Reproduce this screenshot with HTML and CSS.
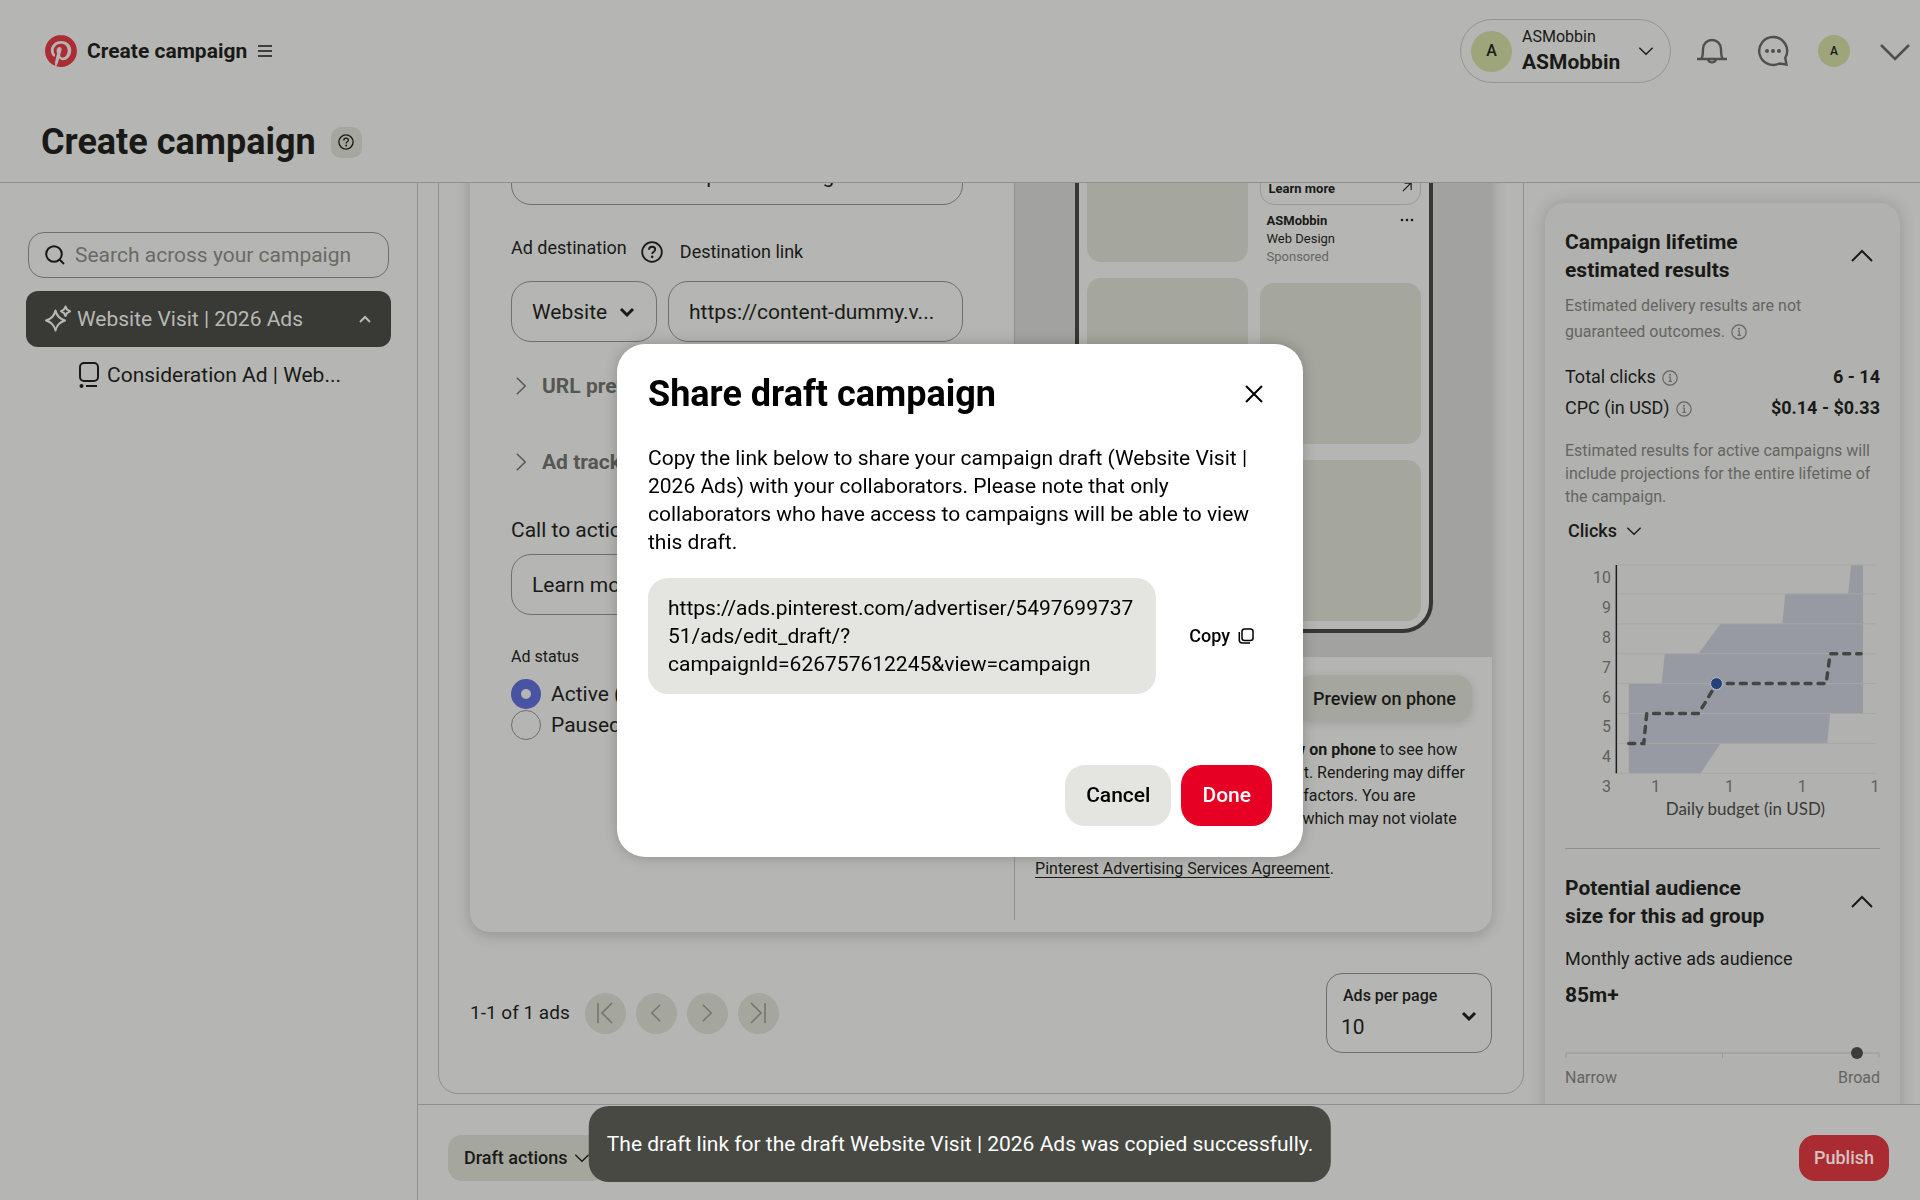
FILE: index.html
```html
<!DOCTYPE html>
<html lang="en">
<head>
<meta charset="utf-8">
<title>Create campaign</title>
<link rel="stylesheet" href="styles.css">
</head>
<body>
<svg class="defs" aria-hidden="true">
  <symbol id="down" viewBox="0 0 24 24"><path d="M2 7l10 10L22 7" fill="none" stroke="currentColor" stroke-width="2"/></symbol>
  <symbol id="down-bold" viewBox="0 0 24 24"><path d="M3 7.500l9 9 9-9" fill="none" stroke="currentColor" stroke-width="4.500"/></symbol>
  <symbol id="up" viewBox="0 0 24 24"><path d="M2 17L12 7l10 10" fill="none" stroke="currentColor" stroke-width="2"/></symbol>
  <symbol id="right" viewBox="0 0 24 24"><path d="M7 2l10 10L7 22" fill="none" stroke="currentColor" stroke-width="1.800"/></symbol>
  <symbol id="left" viewBox="0 0 24 24"><path d="M17 2L7 12l10 10" fill="none" stroke="currentColor" stroke-width="1.800"/></symbol>
  <symbol id="help" viewBox="0 0 24 24"><circle cx="12" cy="12" r="10.700" fill="none" stroke="currentColor" stroke-width="2"/><path d="M8.700 9.600c0-2 1.500-3.300 3.400-3.300s3.400 1.200 3.400 3c0 2.400-3.300 2.500-3.300 5" fill="none" stroke="currentColor" stroke-width="2"/><circle cx="12.200" cy="17.300" r="1.400" fill="currentColor"/></symbol>
  <symbol id="info" viewBox="0 0 24 24"><circle cx="12" cy="12" r="10.700" fill="none" stroke="currentColor" stroke-width="1.800"/><path d="M10 10.500h2.300v6.500M9.800 17h5" fill="none" stroke="currentColor" stroke-width="1.800"/><circle cx="12" cy="7" r="1.400" fill="currentColor"/></symbol>
</svg>

<div class="app">
  <header class="header">
    <div class="topbar">
      <a class="brand" href="#">
        <svg class="logo" viewBox="0 0 24 24"><path fill="#ab2c33" d="M12.017 0C5.396 0 .029 5.367.029 11.987c0 5.079 3.158 9.417 7.618 11.162-.105-.949-.199-2.403.041-3.439.219-.937 1.406-5.957 1.406-5.957s-.359-.72-.359-1.781c0-1.663.967-2.911 2.168-2.911 1.024 0 1.518.769 1.518 1.688 0 1.029-.653 2.567-.992 3.992-.285 1.193.6 2.165 1.775 2.165 2.128 0 3.768-2.245 3.768-5.487 0-2.861-2.063-4.869-5.008-4.869-3.41 0-5.409 2.562-5.409 5.199 0 1.033.394 2.143.889 2.741.099.12.112.225.085.345-.09.375-.293 1.199-.334 1.363-.053.225-.172.271-.401.165-1.495-.69-2.433-2.878-2.433-4.646 0-3.776 2.748-7.252 7.92-7.252 4.158 0 7.392 2.967 7.392 6.923 0 4.135-2.607 7.462-6.233 7.462-1.214 0-2.354-.629-2.758-1.379l-.749 2.848c-.269 1.045-1.004 2.352-1.498 3.146 1.123.345 2.306.535 3.55.535 6.607 0 11.985-5.365 11.985-11.987C23.97 5.39 18.592.026 11.985.026L12.017 0z"/></svg>
        <span>Create campaign</span>
        <svg class="i16" viewBox="0 0 16 16"><path d="M1 3h14M1 8h14M1 13h14" stroke="currentColor" stroke-width="1.500"/></svg>
      </a>
      <div class="tools">
        <button class="account">
          <span class="avatar big">A</span>
          <span class="account-name"><small>ASMobbin</small><strong>ASMobbin</strong></span>
          <svg class="i16"><use href="#down"/></svg>
        </button>
        <button class="tool" aria-label="Notifications"><svg class="i32" viewBox="0 0 32 32" fill="none" stroke="currentColor" stroke-width="2.400"><path d="M1 24h30M5.500 23.500c1.500-2.500 1.500-5 1.500-9.500a9 9 0 0 1 18 0c0 4.500 0 7 1.500 9.500M12 24.500a4.200 4.200 0 0 0 8 0"/></svg></button>
        <button class="tool" aria-label="Messages"><svg class="i32" viewBox="0 0 32 32"><path d="M16 2a14 14 0 1 0 6.500 26.500l7 1-1.300-6.500A14 14 0 0 0 16 2z" fill="none" stroke="currentColor" stroke-width="2.400"/><circle cx="10" cy="16" r="2" fill="currentColor"/><circle cx="16" cy="16" r="2" fill="currentColor"/><circle cx="22" cy="16" r="2" fill="currentColor"/></svg></button>
        <button class="tool" aria-label="Profile"><span class="avatar">A</span></button>
        <button class="tool" aria-label="More"><svg class="i32" viewBox="0 0 32 32"><path d="M2 10l14 14L30 10" fill="none" stroke="currentColor" stroke-width="2.600"/></svg></button>
      </div>
    </div>
    <div class="titlebar">
      <h1>Create campaign</h1>
      <button class="help-button" aria-label="Help"><svg class="i16"><use href="#help"/></svg></button>
    </div>
  </header>

  <div class="body">
    <nav class="sidebar">
      <label class="search">
        <svg class="i20" viewBox="0 0 20 20"><circle cx="9" cy="9" r="7.800" fill="none" stroke="currentColor" stroke-width="2"/><path d="M14.500 14.500L19 19" stroke="currentColor" stroke-width="2"/></svg>
        <input type="text" aria-label="Search" placeholder="Search across your campaign">
      </label>
      <a class="nav-item" href="#">
        <svg class="i28" viewBox="0 0 28 28" fill="none" stroke="currentColor" stroke-width="2" stroke-linejoin="round"><path d="M11.500 5.500c1.200 5.500 3.500 8.200 9.500 10-6 1.800-8.300 4.500-9.500 10-1.200-5.500-3.500-8.200-9.500-10 6-1.800 8.300-4.500 9.500-10z"/><path d="M21.500 1.500c.700 2.700 1.700 3.800 4.500 4.800-2.800 1-3.800 2.100-4.500 4.800-.700-2.700-1.700-3.800-4.500-4.800 2.800-1 3.800-2.100 4.500-4.800z"/></svg>
        <span class="grow">Website Visit | 2026 Ads</span>
        <svg class="i12" viewBox="0 0 12 12"><path d="M1 9l5-5 5 5" fill="none" stroke="currentColor" stroke-width="2"/></svg>
      </a>
      <a class="nav-child" href="#">
        <svg class="ad-icon" viewBox="0 0 20 26"><rect x="1" y="1" width="18" height="18" rx="4" fill="none" stroke="currentColor" stroke-width="2"/><circle cx="2.500" cy="24" r="2" fill="currentColor"/><path d="M7 24h11" stroke="currentColor" stroke-width="2"/></svg>
        <span>Consideration Ad | Web...</span>
      </a>
    </nav>

    <main class="main">
      <div class="scroller">
        <section class="group">
          <div class="ad-card">
            <form class="ad-form">
              <input class="box" type="text" aria-label="Title" value="Modern &amp; creative product design">
              <div class="label-row">
                <label for="dest">Ad destination</label>
                <svg class="i22"><use href="#help"/></svg>
                <label for="link">Destination link</label>
              </div>
              <div class="field-row">
                <div class="select-wrap">
                  <select class="box" id="dest"><option>Website</option></select>
                  <svg class="i16"><use href="#down-bold"/></svg>
                </div>
                <input class="box" id="link" type="text" value="https://content-dummy.v...">
              </div>
              <button type="button" class="disclosure"><svg class="i20"><use href="#right"/></svg>URL preview</button>
              <button type="button" class="disclosure second"><svg class="i20"><use href="#right"/></svg>Ad tracking</button>
              <label class="cta-label" for="cta">Call to action</label>
              <div class="select-wrap">
                <select class="box" id="cta"><option>Learn more</option></select>
              </div>
              <fieldset class="status">
                <legend>Ad status</legend>
                <label><input type="radio" name="status" checked>Active (default)</label>
                <label><input type="radio" name="status">Paused</label>
              </fieldset>
            </form>
            <div class="preview">
              <div class="stage">
                <div class="phone">
                  <div class="column">
                    <div class="tile fill"></div>
                    <div class="tile tall"></div>
                    <div class="tile"></div>
                  </div>
                  <div class="column">
                    <div class="pin-cta"><b>Learn more</b><svg class="arrow" viewBox="0 0 12 12"><path d="M1 11l9.500-9.500M3 1.500h8v8" fill="none" stroke="currentColor" stroke-width="1.400"/></svg></div>
                    <div class="pin-meta">
                      <div><b>ASMobbin</b><br>Web Design<br><span class="muted">Sponsored</span></div>
                      <svg class="dots" viewBox="0 0 14 4" fill="currentColor"><circle cx="2" cy="2" r="1.300"/><circle cx="7" cy="2" r="1.300"/><circle cx="12" cy="2" r="1.300"/></svg>
                    </div>
                    <div class="tile"></div>
                    <div class="tile"></div>
                  </div>
                </div>
              </div>
              <button class="phone-button">Preview on phone</button>
              <p>Scan the code when you click <b>Preview on phone</b> to see how<br>your ad will look in the selected format. Rendering may differ<br>based on device, app version or other factors. You are<br>responsible for the content of all ads, which may not violate<br>the terms of the</p>
              <div class="agreement"><a href="#">Pinterest Advertising Services Agreement</a>.</div>
            </div>
          </div>
          <div class="pager">
            <span class="count">1-1 of 1 ads</span>
            <div class="pages">
              <button aria-label="First page"><svg class="i24" viewBox="0 0 24 24"><path d="M5 2v20M19 2L9 12l10 10" fill="none" stroke="currentColor" stroke-width="1.600"/></svg></button>
              <button aria-label="Previous page"><svg class="i20"><use href="#left"/></svg></button>
              <button aria-label="Next page"><svg class="i20"><use href="#right"/></svg></button>
              <button aria-label="Last page"><svg class="i24" viewBox="0 0 24 24"><path d="M19 2v20M5 2l10 10L5 22" fill="none" stroke="currentColor" stroke-width="1.600"/></svg></button>
            </div>
            <div class="per-page">
              <label for="per">Ads per page</label>
              <select id="per"><option>10</option></select>
              <svg class="i16"><use href="#down-bold"/></svg>
            </div>
          </div>
        </section>

        <aside class="results">
          <div class="results-card">
            <div class="results-head"><h2>Campaign lifetime estimated results</h2><svg class="i24"><use href="#up"/></svg></div>
            <p class="note tall">Estimated delivery results are not guaranteed outcomes. <svg class="i16"><use href="#info"/></svg></p>
            <dl>
              <div><dt>Total clicks <svg class="i16"><use href="#info"/></svg></dt><dd>6 - 14</dd></div>
              <div><dt>CPC (in USD) <svg class="i16"><use href="#info"/></svg></dt><dd>$0.14 - $0.33</dd></div>
            </dl>
            <p class="note">Estimated results for active campaigns will include projections for the entire lifetime of the campaign.</p>
            <button class="metric">Clicks <svg class="i16"><use href="#down"/></svg></button>
            <svg class="chart" viewBox="0 0 316 262">
              <path d="M64 123h33l3-30h34l22-30h62l3-30h63l3-29h12v149h-33l-3 30H156l-20 30H64z" fill="#989aa3"/>
              <path d="M52 4h260M52 33h260M52 63h260M52 93h260M52 123h260M52 153h260M52 183h260M52 213h260" stroke="#a6a7a5" stroke-width="1"/>
              <path d="M51.500 4v209" stroke="#1c1d1a" stroke-width="1.500"/>
              <path d="M64 183h15l3-30h52l18-30h110l4-30h31" fill="none" stroke="#444642" stroke-width="3.500" stroke-linecap="round" stroke-dasharray="6 7"/>
              <circle cx="152" cy="123" r="6" fill="#253f77" stroke="#b5bfd0" stroke-width="1"/>
              <g class="ticks" text-anchor="end"><text x="46" y="22">10</text><text x="46" y="52">9</text><text x="46" y="82">8</text><text x="46" y="112">7</text><text x="46" y="142">6</text><text x="46" y="172">5</text><text x="46" y="202">4</text><text x="46" y="232">3</text></g>
              <g class="ticks" text-anchor="middle"><text x="91" y="232">1</text><text x="165" y="232">1</text><text x="238" y="232">1</text><text x="311" y="232">1</text></g>
              <text class="axis-title" x="181" y="255" text-anchor="middle">Daily budget (in USD)</text>
            </svg>
            <hr>
            <div class="results-head"><h2>Potential audience size for this ad group</h2><svg class="i24"><use href="#up"/></svg></div>
            <div class="audience">Monthly active ads audience</div>
            <div class="audience-size">85m+</div>
            <svg class="range" viewBox="0 0 316 16"><path d="M1 11V6h314v5M158 6v5" fill="none" stroke="#999a97" stroke-width="1"/><circle cx="293" cy="6" r="6" fill="#3c3d39"/></svg>
            <div class="range-labels"><span>Narrow</span><span>Broad</span></div>
          </div>
        </aside>
      </div>
      <footer class="footer">
        <button class="draft">Draft actions <svg class="i16"><use href="#down"/></svg></button>
        <button class="publish">Publish</button>
      </footer>
    </main>
  </div>
</div>

<div class="overlay">
  <div class="modal" role="dialog" aria-labelledby="share-title">
    <div class="modal-head">
      <h2 id="share-title">Share draft campaign</h2>
      <button class="close" aria-label="Close"><svg class="i20" viewBox="0 0 20 20"><path d="M2 2l16 16M18 2L2 18" stroke="currentColor" stroke-width="2"/></svg></button>
    </div>
    <p>Copy the link below to share your campaign draft (Website Visit |<br>2026 Ads) with your collaborators. Please note that only<br>collaborators who have access to campaigns will be able to view<br>this draft.</p>
    <div class="share-row">
      <div class="share-link">https://ads.pinterest.com/advertiser/5497699737<br>51/ads/edit_draft/?<br>campaignId=626757612245&amp;view=campaign</div>
      <button class="copy">Copy <svg class="i16" viewBox="0 0 16 16" fill="none" stroke="currentColor" stroke-width="1.500"><rect x="4" y="1" width="11" height="11.500" rx="2.500"/><path d="M1.300 4v8a3 3 0 0 0 3 3H12"/></svg></button>
    </div>
    <div class="actions">
      <button class="cancel">Cancel</button>
      <button class="done">Done</button>
    </div>
  </div>
</div>
<div class="toast" role="status">The draft link for the draft Website Visit | 2026 Ads was copied successfully.</div>
</body>
</html>
```

FILE: styles.css
```css
:root {
  --surface: #b5b6b3;
  --tile: #a5a69d;
  --line: #90918e;
  --border: #6f706d;
  --ink: #191a17;
  --muted: #646561;
}

* { box-sizing: border-box; }

body {
  margin: 0;
  background: var(--surface);
  color: var(--ink);
  font: 21px/28px Roboto, "Liberation Sans", sans-serif;
}

h1, h2, p, dl, dd { margin: 0; }
button, input, select { font: inherit; color: inherit; }
button { border: 0; padding: 0; background: none; }
a { color: inherit; text-decoration: none; }
svg { flex: none; }
.defs { position: absolute; width: 0; height: 0; }
.i12 { width: 12px; height: 12px; }
.i16 { width: 16px; height: 16px; }
.i20 { width: 20px; height: 20px; }
.i22 { width: 22px; height: 22px; }
.i24 { width: 24px; height: 24px; }
.i28 { width: 28px; height: 28px; }
.i32 { width: 32px; height: 32px; }
.grow { flex: 1; }
.muted { color: var(--muted); }

.app { display: flex; flex-direction: column; height: 100vh; }

.header { border-bottom: 1px solid var(--line); }
.topbar { display: flex; align-items: center; justify-content: space-between; height: 102px; padding: 0 9px 0 45px; }
.brand { display: flex; align-items: center; gap: 10px; font-weight: 700; }
.logo { width: 32px; height: 32px; }
.tools { display: flex; align-items: center; gap: 29px; }
.account { display: flex; align-items: center; width: 211px; height: 64px; padding: 0 16px 0 10px; border: 1px solid #949592; border-radius: 32px; text-align: left; margin-right: -4px; }
.account-name { display: flex; flex-direction: column; flex: 1; margin-left: 10px; }
.account-name small { font-size: 16px; line-height: 22px; }
.account-name strong { line-height: 28px; }
.avatar { display: grid; place-items: center; width: 32px; height: 32px; border-radius: 50%; background: #9ea57b; font-size: 12px; font-weight: 500; }
.avatar.big { width: 41px; height: 41px; font-size: 16px; }
.tool { display: flex; color: #4f504d; }
.tool .avatar { color: var(--ink); }
.titlebar { display: flex; align-items: center; gap: 15px; height: 80px; padding: 0 41px; }
.titlebar h1 { font-size: 36px; line-height: 48px; }
.help-button { display: grid; place-items: center; width: 31px; height: 31px; border-radius: 10px; background: var(--tile); }

.body { flex: 1; display: flex; min-height: 0; }
.sidebar { width: 418px; padding: 49px 26px 0; border-right: 1px solid var(--line); }
.search { display: flex; align-items: center; gap: 10px; height: 46px; margin: 0 2px 13px; padding: 0 16px; border: 1px solid var(--border); border-radius: 16px; }
.search input { flex: 1; min-width: 0; border: 0; padding: 0; background: none; }
.search input::placeholder { color: #696a66; opacity: 1; }
.nav-item { display: flex; align-items: center; gap: 5px; height: 56px; padding: 0 20px 0 18px; border-radius: 12px; background: #393a35; color: #b8b9b6; }
.nav-child { display: flex; align-items: center; gap: 8px; height: 56px; padding-left: 53px; }
.ad-icon { width: 20px; height: 26px; }

.main { flex: 1; display: flex; flex-direction: column; min-width: 0; }
.scroller { flex: 1; display: grid; grid-template-columns: minmax(0, 1fr) 355px; grid-template-rows: minmax(0, 1fr); gap: 21px; min-height: 0; padding: 0 20px 10px 20px; overflow: hidden; }
.group { align-self: end; padding: 0 31px 40px; border: 1px solid var(--line); border-radius: 20px; }
.ad-card { display: grid; grid-template-columns: minmax(0, 8fr) minmax(0, 7fr); padding-bottom: 12px; border-radius: 20px; box-shadow: 0 3px 14px rgba(30, 30, 20, .22); }

.ad-form { display: flex; flex-direction: column; align-items: stretch; padding: 0 51px 180px 41px; border-right: 1px solid var(--line); }
.box { width: 100%; min-width: 0; height: 61px; padding: 0 20px; border: 1px solid var(--border); border-radius: 20px; background: none; appearance: none; }
.ad-form > .box { padding-top: 2px; }
.label-row { display: flex; align-items: center; height: 30px; margin: 32px 0 14px; font-size: 18px; line-height: 22px; }
.label-row label:first-child { align-self: flex-start; }
.label-row svg { margin: 0 17px 0 14px; }
.field-row { display: grid; grid-template-columns: 146px 1fr; gap: 11px; }
.select-wrap { position: relative; height: 61px; }
.select-wrap svg { position: absolute; right: 22px; top: 23px; }
.disclosure { display: flex; align-items: center; gap: 11px; margin-top: 30px; font-weight: 700; color: #565753; }
.disclosure.second { margin-top: 48px; }
.cta-label { margin: 40px 0 10px; }
.status { display: flex; flex-direction: column; border: 0; margin: 31px 0 0; padding: 0; }
.status legend { margin-bottom: 10px; padding: 0; font-size: 16px; line-height: 22px; }
.status label { display: flex; align-items: center; gap: 10px; height: 31px; }
.status input { width: 30px; height: 30px; margin: 0; border: 1px solid var(--border); border-radius: 50%; appearance: none; }
.status input:checked { border: 10px solid #4853a2; }

.preview { display: flex; flex-direction: column; font-size: 16px; line-height: 23px; }
.stage { flex: 1; display: flex; justify-content: center; padding-bottom: 24px; background: #a2a3a0; }
.phone { display: grid; grid-template-columns: 1fr 1fr; gap: 12px; width: 358px; padding: 0 8px 8px; border: solid #363735; border-width: 0 4px 4px; border-radius: 0 0 30px 30px; background: var(--surface); font-size: 13px; line-height: 18px; }
.column { display: flex; flex-direction: column; gap: 16px; }
.tile { height: 161px; border-radius: 14px; background: var(--tile); }
.tile.tall { height: 166px; }
.tile.fill { flex: 1; }
.pin-cta { flex: 1; display: flex; align-items: flex-end; justify-content: space-between; padding: 0 8px 6px; border: 1px solid #999a97; border-radius: 0 0 14px 14px; }
.arrow { width: 10px; height: 10px; margin-bottom: 6px; }
.pin-meta { display: flex; justify-content: space-between; padding: 0 7px; margin: -9px 0 1px; }
.dots { width: 14px; height: 4px; margin-top: 6px; }
.phone-button { align-self: flex-end; height: 46px; margin: 18px 20px 17px; padding: 0 16px; border-radius: 16px; background: var(--tile); box-shadow: 0 2px 8px rgba(30, 30, 20, .16); font-size: 18px; font-weight: 500; }
.preview p { width: max-content; padding-left: 20px; }
.agreement { margin: 4px 0 40px; padding-left: 20px; }
.agreement a { text-decoration: underline; text-underline-offset: 3px; }

.pager { display: flex; align-items: center; margin-top: 41px; }
.count { font-size: 19px; }
.pages { flex: 1; display: flex; gap: 10px; margin-left: 15px; color: #747570; }
.pages button { display: grid; place-items: center; width: 41px; height: 41px; border-radius: 50%; background: var(--tile); }
.per-page { position: relative; display: flex; flex-direction: column; width: 166px; height: 80px; padding: 11px 14px; border: 1px solid var(--border); border-radius: 16px; }
.per-page label { padding-left: 2px; font-size: 16px; line-height: 22px; font-weight: 500; }
.per-page select { flex: 1; padding: 6px 0 0; border: 0; background: none; appearance: none; }
.per-page svg { position: absolute; right: 14px; top: 34px; }

.results { align-self: start; padding-top: 20px; }
.results-card { padding: 25px 20px 60px; border-radius: 20px; background: #b1b2af; box-shadow: 0 0 16px rgba(30, 30, 20, .2); }
.results-head { display: flex; align-items: center; justify-content: space-between; padding-right: 6px; }
.results-head h2 { width: 210px; font-size: 21px; line-height: 28px; }
.note { color: var(--muted); font-size: 16px; line-height: 23px; }
.note.tall { width: 260px; margin-top: 9px; line-height: 26px; }
.note svg, dt svg { vertical-align: -3px; margin-left: 2px; color: var(--muted); }
.results dl { margin: 16px 0; font-size: 18px; line-height: 31px; }
.results dl div { display: flex; justify-content: space-between; }
.results dd { font-weight: 700; }
.metric { display: flex; align-items: center; gap: 9px; margin: 9px 0 16px 3px; font-size: 18px; font-weight: 500; }
.chart { display: block; width: 100%; }
.ticks { font-size: 16px; fill: #5f605c; }
.axis-title { font: 17px Lato, sans-serif; fill: #3a3b38; }
.results hr { margin: 26px 0 25px; border: 0; border-top: 1px solid var(--line); }
.audience { margin-top: 15px; font-size: 18px; }
.audience-size { margin-top: 8px; font-weight: 700; }
.range { display: block; width: 100%; margin: 38px 0 1px; overflow: visible; }
.range-labels { display: flex; justify-content: space-between; color: var(--muted); font-size: 16px; }

.footer { display: flex; align-items: center; justify-content: space-between; height: 96px; padding: 10px 31px 0 30px; border-top: 1px solid var(--line); font-size: 18px; font-weight: 500; }
.draft { display: flex; align-items: center; gap: 6px; height: 46px; padding: 0 16px; border-radius: 14px; background: var(--tile); }
.publish { height: 46px; padding: 0 15px; border-radius: 16px; background: #aa2c32; color: #d5c4c3; }

.overlay { position: fixed; inset: 0; display: grid; place-items: center; }
.modal { width: 686px; padding: 25px 31px 31px; border-radius: 28px; background: #fff; color: #000; box-shadow: 0 0 14px rgba(0, 0, 0, .22); }
.modal-head { display: flex; align-items: center; justify-content: space-between; padding-right: 8px; margin-bottom: 25px; }
.modal h2 { font-size: 36px; line-height: 50px; }
.close { display: flex; }
.share-row { display: flex; align-items: center; justify-content: space-between; margin: 22px 18px 71px 0; }
.share-link { width: 508px; padding: 16px 20px; border-radius: 20px; background: #e4e5e0; }
.copy { display: flex; align-items: center; gap: 8px; font-size: 18px; font-weight: 500; }
.actions { display: flex; justify-content: flex-end; gap: 10px; }
.actions button { height: 61px; padding: 0 21px; border-radius: 20px; font-weight: 500; }
.cancel { background: #e4e5e0; }
.done { background: #e60023; color: #fff; }

.toast { position: fixed; bottom: 18px; left: 50%; transform: translateX(-50%); padding: 24px 18px; border-radius: 20px; background: #484943; color: #fff; white-space: nowrap; }
```
